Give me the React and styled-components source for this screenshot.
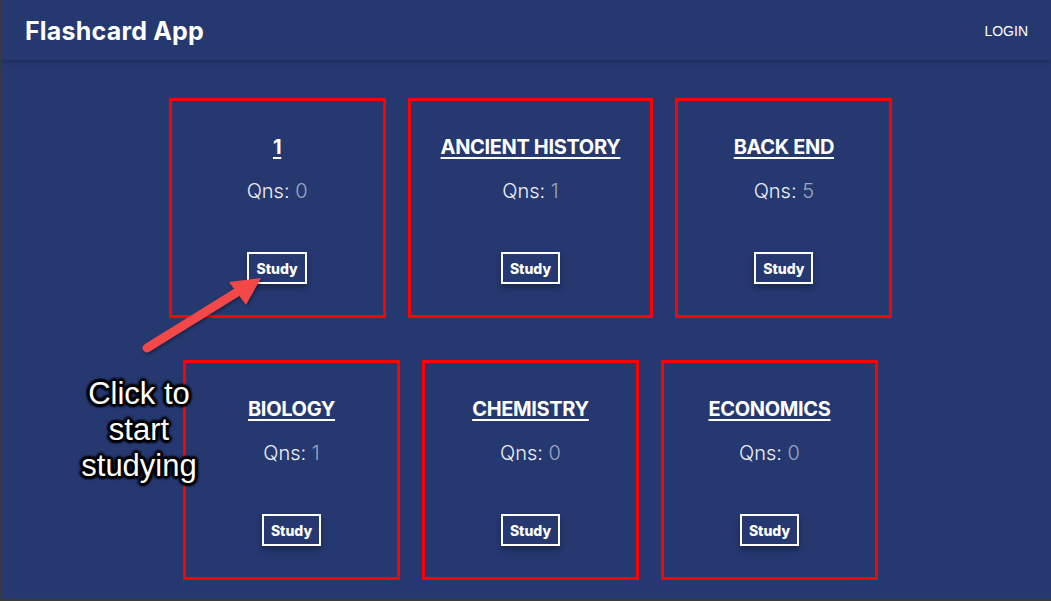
import React from 'react';
import styled, { createGlobalStyle } from 'styled-components';

const GlobalStyle = createGlobalStyle`
  html, body { margin: 0; padding: 0; }
  body {
    background: #253870;
    font-family: Inter, "Noto Sans", sans-serif;
    color: #fff;
  }
`;

const Frame = styled.div`
  height: 100vh;
  box-sizing: border-box;
  border-left: 1px solid #3b3b3b;
  border-bottom: 2px solid #3b3b3b;
  background: #253870;
  overflow: hidden;
`;

const Header = styled.header`
  height: 60px;
  display: flex;
  align-items: center;
  justify-content: space-between;
  padding: 2px 23px 0 24px;
  box-sizing: border-box;
  box-shadow: 0 2px 4px rgba(0, 0, 0, 0.22);
`;

const Brand = styled.h1`
  margin: 0;
  font-family: Inter, "Noto Sans", sans-serif;
  font-weight: 700;
  font-size: 25px;
  letter-spacing: 0.2px;
  color: #fff;
`;

const Login = styled.a`
  font-family: "Liberation Sans", Arial, sans-serif;
  font-size: 14px;
  color: #fff;
  text-decoration: none;
`;

const Main = styled.main`
  position: relative;
  padding: 38px 0 0 9px;
`;

const Deck = styled.div`
  width: 730px;
  margin: 0 auto;
  display: flex;
  flex-wrap: wrap;
  justify-content: center;
  gap: 42px 22px;
`;

const Card = styled.div`
  height: 220px;
  min-width: 217px;
  box-sizing: border-box;
  padding: 33px 30px 31px;
  border: 3px solid #ff0000;
  display: flex;
  flex-direction: column;
  align-items: center;
`;

const Title = styled.a`
  font-weight: 700;
  font-size: 20px;
  line-height: 27px;
  color: #fff;
  text-decoration: underline;
  text-decoration-thickness: 1.5px;
  text-underline-offset: 3px;
  text-transform: uppercase;
  letter-spacing: -0.35px;
`;

const Count = styled.p`
  margin: 17px 0 0;
  font-size: 20px;
  line-height: 27px;
  font-weight: 300;
  color: #eef0f6;
`;

const Num = styled.span`
  color: #9ea7bd;
`;

const StudyButton = styled.button`
  margin-top: auto;
  background: transparent;
  border: 2px solid #fff;
  color: #fff;
  font-family: Inter, "Noto Sans", sans-serif;
  font-weight: 800;
  font-size: 14px;
  height: 32px;
  padding: 0 7px;
  box-shadow: 0 4px 6px rgba(0, 0, 0, 0.3);
  cursor: pointer;
`;

const Note = styled.div`
  position: absolute;
  left: 63px;
  top: 316px;
  width: 150px;
  text-align: center;
  font-family: "Liberation Sans", Arial, sans-serif;
  font-size: 31px;
  line-height: 36px;
  color: #fff;
  text-shadow:
    0 0 2px #000, 0 0 2px #000, 0 0 3px #000, 0 0 4px #000,
    2px 2px 2px #000, -2px -2px 2px #000, 2px -2px 2px #000, -2px 2px 2px #000,
    3px 0 2px #000, -3px 0 2px #000, 0 3px 2px #000, 0 -3px 2px #000;
`;

const ArrowLayer = styled.svg`
  position: absolute;
  left: 130px;
  top: 200px;
  pointer-events: none;
`;

const decks = [
  { title: '1', count: 0 },
  { title: 'Ancient History', count: 1 },
  { title: 'Back End', count: 5 },
  { title: 'Biology', count: 1 },
  { title: 'Chemistry', count: 0 },
  { title: 'Economics', count: 0 },
];

function Arrow() {
  return (
    <ArrowLayer width="150" height="100" viewBox="0 0 150 100">
      <g fill="#f24848" style={{ filter: 'drop-shadow(1px 2px 1.5px rgba(0,0,0,0.35))' }}>
        <line x1="16" y1="88" x2="108" y2="31" stroke="#f24848" strokeWidth="9" strokeLinecap="round" />
        <polygon points="130,18 98,22 115,45" />
      </g>
    </ArrowLayer>
  );
}

export default function App() {
  return (
    <>
      <GlobalStyle />
      <Frame>
        <Header>
          <Brand>Flashcard App</Brand>
          <Login href="#">LOGIN</Login>
        </Header>
        <Main>
          <Deck>
            {decks.map(d => (
              <Card key={d.title}>
                <Title href="#">{d.title}</Title>
                <Count>Qns: <Num>{d.count}</Num></Count>
                <StudyButton>Study</StudyButton>
              </Card>
            ))}
          </Deck>
          <Arrow />
          <Note>Click to start studying</Note>
        </Main>
      </Frame>
    </>
  );
}
